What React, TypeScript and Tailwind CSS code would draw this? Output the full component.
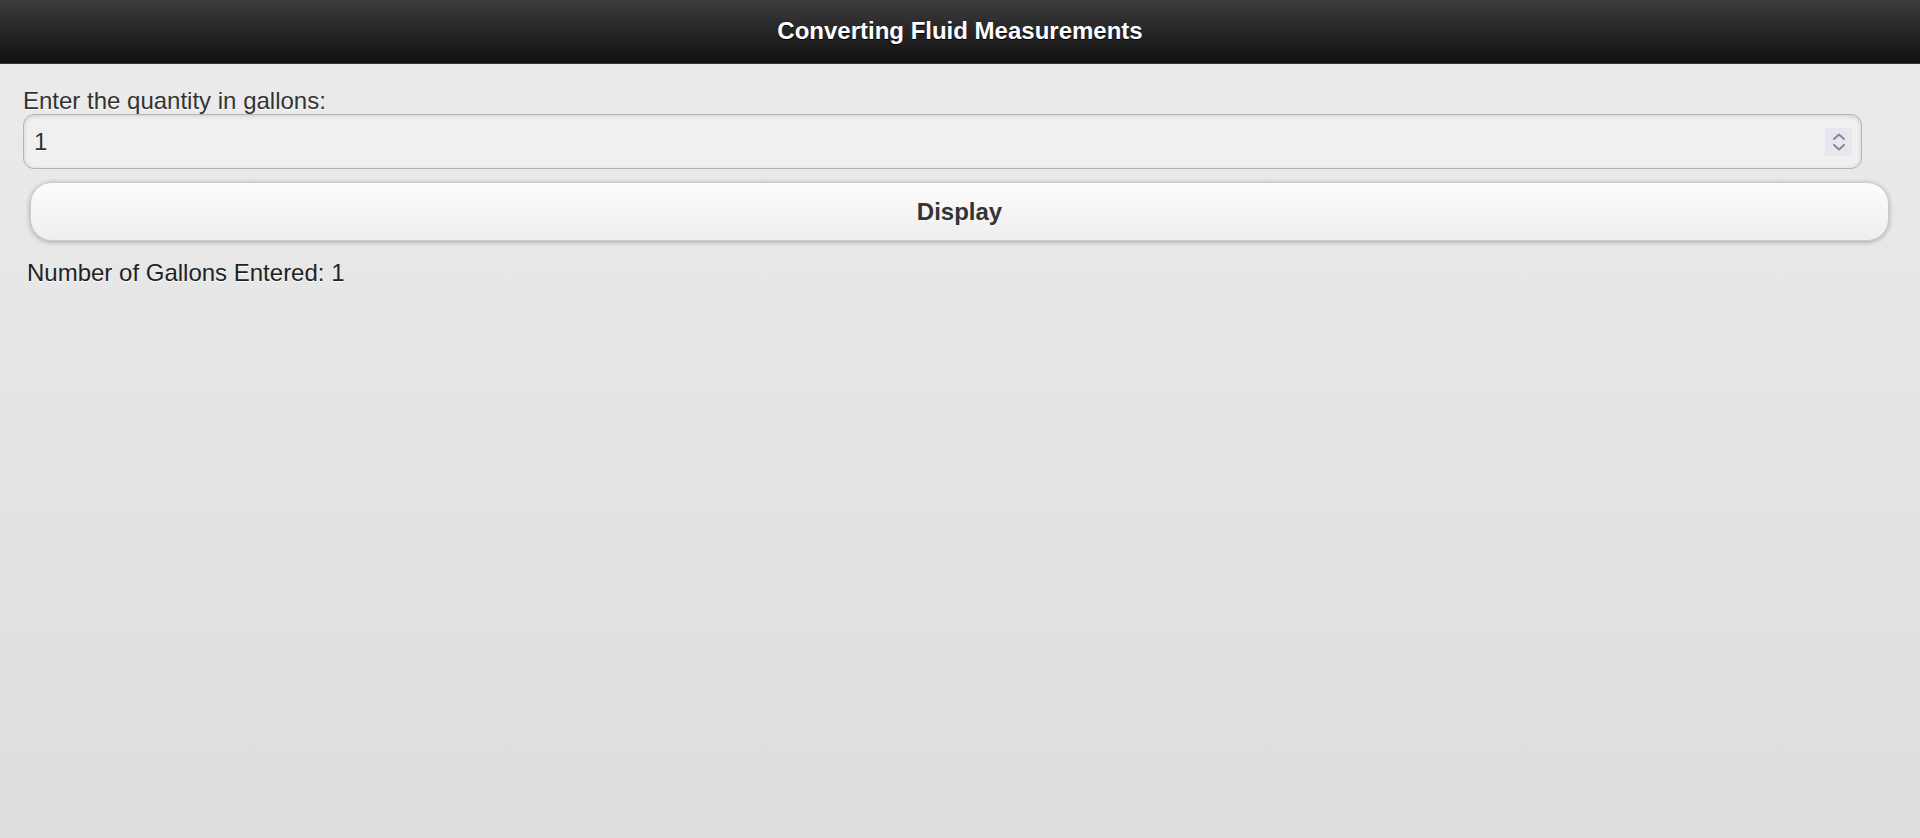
export default function App() {
  return (
    <div className="flex min-h-[838px] flex-col bg-gradient-to-b from-[#ececec] to-[#dddddd] font-['Liberation_Sans',Arial,sans-serif] text-[#333]">
      {/* Title bar */}
      <header className="flex h-[64px] items-center justify-center border-y border-[#333] border-t-[#3d3d3d] bg-gradient-to-b from-[#3c3c3c] to-[#111] pb-[2px] text-[24px] font-bold text-white [text-shadow:0_1px_0_#000]">
        Converting Fluid Measurements
      </header>

      <main className="flex flex-col px-[23px] pt-[23px] [text-shadow:0_1px_0_#fff]">
        <label className="leading-[27px] text-[24px] text-[#333]">
          Enter the quantity in gallons:
        </label>
        <div className="mr-[35px] flex h-[55px] items-center rounded-[11px] border border-[#b4b4b4] bg-[#f0f0f0] pl-[10px] pr-[9px] text-[24px] shadow-[inset_0_1px_4px_rgba(0,0,0,0.15)]">
          <span className="flex-1">1</span>
          <Spinner />
        </div>

        <button className="ml-[7px] mr-[8px] mt-[13px] h-[59px] rounded-[22px] border border-[#ccc] bg-gradient-to-b from-[#fdfdfd] to-[#eeeeee] text-[24px] font-bold text-[#333] shadow-[0_1px_5px_rgba(0,0,0,0.3)]">
          Display
        </button>

        <p className="ml-[4px] mt-[18px] leading-[27px] text-[24px] text-[#222]">
          Number of Gallons Entered: 1
        </p>
      </main>
    </div>
  );
}

function Spinner() {
  return (
    <span className="grid h-[28px] w-[27px] place-items-center bg-[#e8e6ee]">
      <svg width="14" height="22" viewBox="0 0 14 22" fill="none" stroke="#8b8799" strokeWidth="2" strokeLinecap="round" strokeLinejoin="round">
        <path d="M2 8 L7 3.5 L12 8" />
        <path d="M2 14 L7 18.5 L12 14" />
      </svg>
    </span>
  );
}
